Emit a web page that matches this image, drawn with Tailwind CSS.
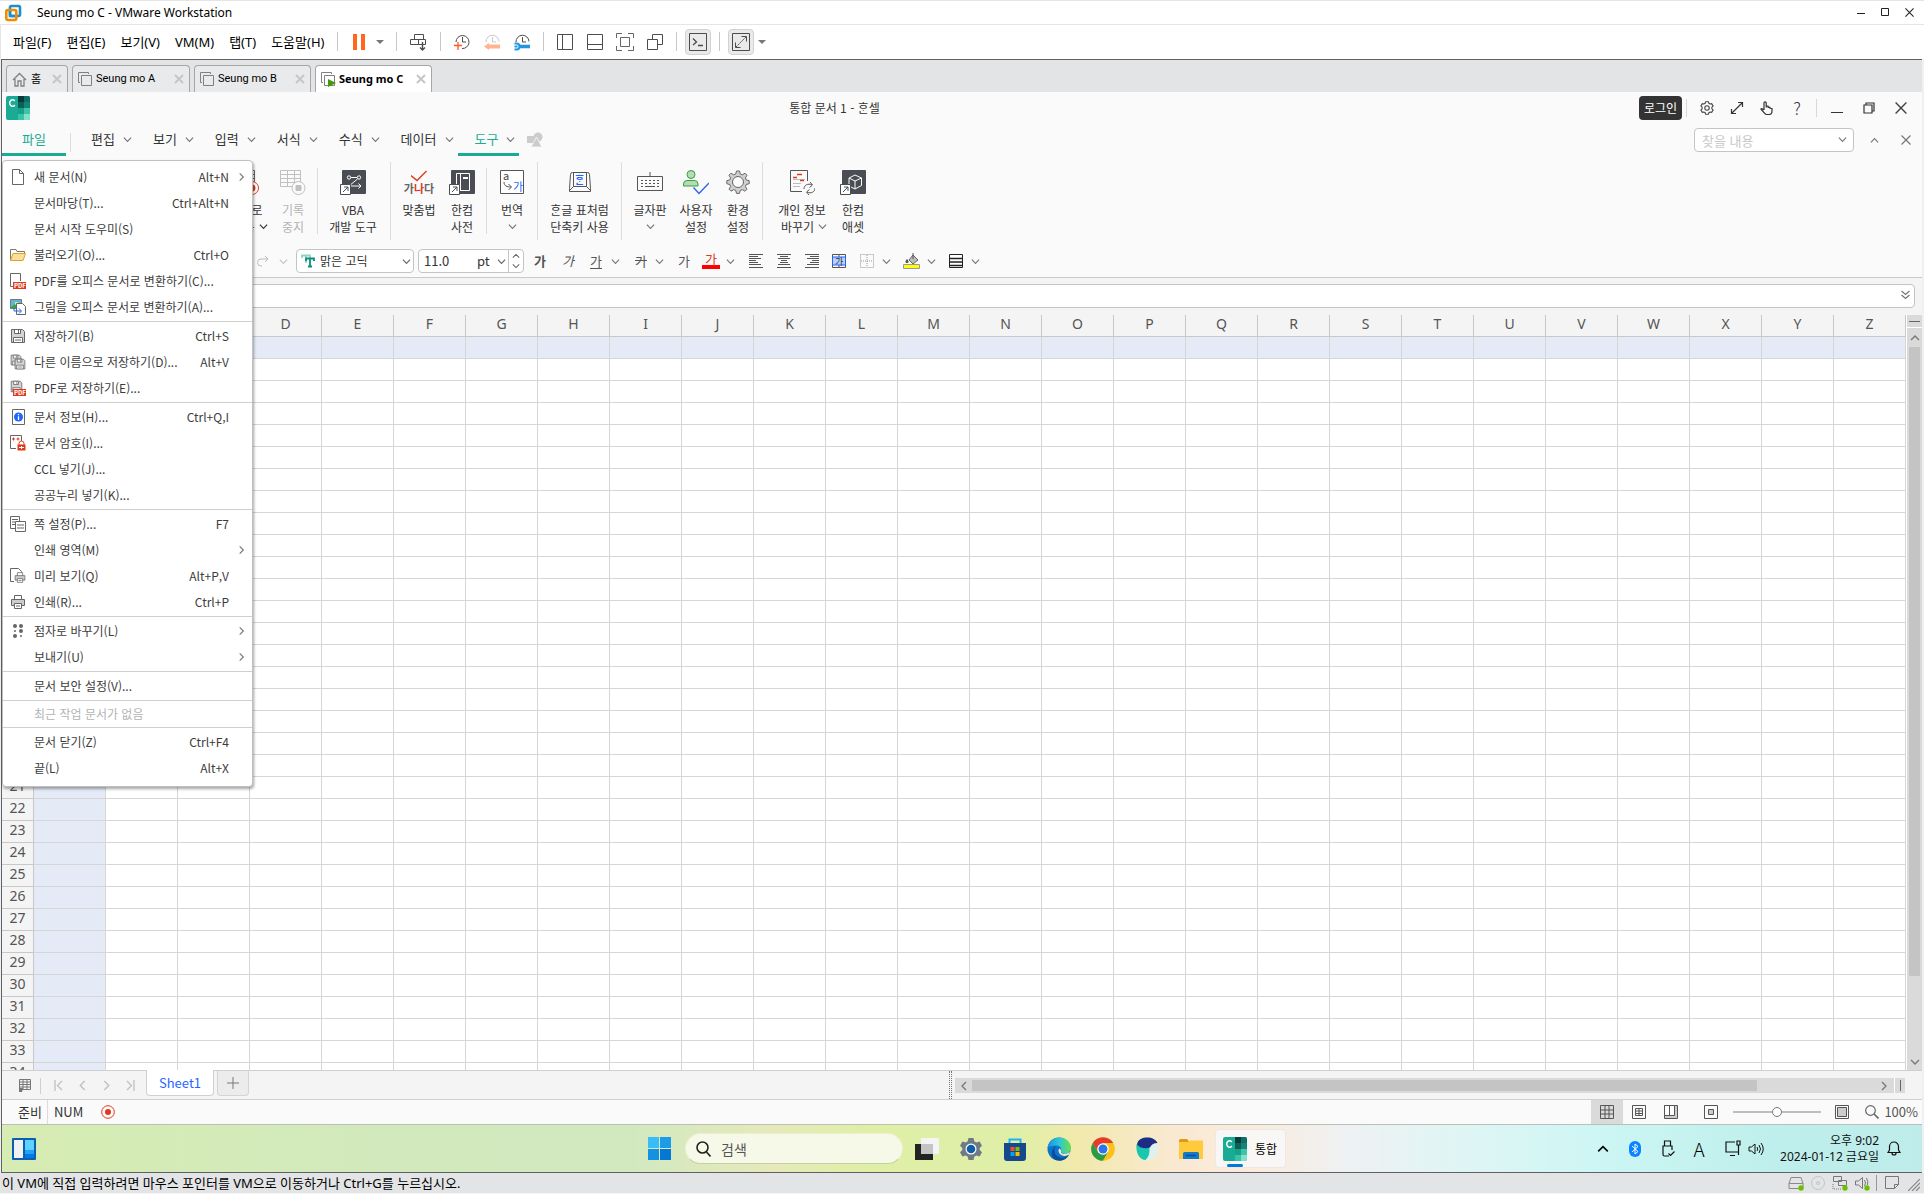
<!DOCTYPE html>
<html lang="ko">

<head>
    <meta charset="UTF-8">
    <meta name="viewport" content="width=device-width, initial-scale=1.0">
    <title>Seung mo C - VMware Workstation</title>
    <script src="https://cdn.jsdelivr.net/npm/@tailwindcss/browser@4"></script>
</head>

<body class="bg-[#f0f0f0] text-black font-['Noto_Sans','Noto_Sans_CJK_KR',sans-serif] text-xs leading-4">
    <!-- shared shapes -->
    <svg class="hidden">
        <symbol id="down" viewBox="0 0 10 10"><path d="M1 3l4 4 4-4" fill="none" stroke="currentColor" stroke-width="1.3" /></symbol>
        <symbol id="up" viewBox="0 0 10 10"><path d="M1 7l4-4 4 4" fill="none" stroke="currentColor" stroke-width="1.3" /></symbol>
        <symbol id="right" viewBox="0 0 10 10"><path d="M3 1l4 4-4 4" fill="none" stroke="currentColor" stroke-width="1.3" /></symbol>
        <symbol id="left" viewBox="0 0 10 10"><path d="M7 1L3 5l4 4" fill="none" stroke="currentColor" stroke-width="1.3" /></symbol>
        <symbol id="cross" viewBox="0 0 10 10"><path d="M0.5 0.5l9 9M9.5 0.5l-9 9" fill="none" stroke="currentColor" stroke-width="1.2" /></symbol>
        <symbol id="tabx" viewBox="0 0 10 10"><path d="M1 1l8 8M9 1l-8 8" fill="none" stroke="currentColor" stroke-width="2" /></symbol>
        <symbol id="vm" viewBox="0 0 16 16"><path d="M11.500 3V1.500H1.500v10H3M4.500 4.500h10v10h-10z" fill="none" stroke="#808080" /></symbol>
        <symbol id="hcell" viewBox="0 0 24 24">
            <rect width="24" height="24" rx="2" fill="#1aab94" />
            <path d="M12 0h6v6h-6z" fill="#063c3c" /><path d="M18 0h4a2 2 0 012 2v4h-6z" fill="#0f6e65" />
            <path d="M12 6h6v6h-6z" fill="#0e5f58" /><path d="M18 6h6v6h-6z" fill="#138577" />
            <path d="M12 12h6v6h-6z" fill="#17a08a" /><path d="M18 12h6v6h-6z" fill="#3cc5a9" />
            <path d="M12 18h6v6h-6z" fill="#37c3a7" /><path d="M18 18h6v4a2 2 0 01-2 2h-4z" fill="#86dfc9" />
            <path d="M8.800 5A2.800 3.300 0 108.800 9" fill="none" stroke="#fff" stroke-width="1.500" />
        </symbol>
        <symbol id="floppy" viewBox="0 0 16 16">
            <path d="M1.500 1.500h11l2 2v11h-13z" fill="#d4d4d4" stroke="#666" />
            <path d="M4.500 1.500h6v4h-6zM3.500 9.500h9v5h-9z" fill="#fff" stroke="#666" /><path d="M8.500 2v3M5 12h6" stroke="#666" />
        </symbol>
        <symbol id="linkbox" viewBox="0 0 11 11"><path d="M.5.5h10v10H.5z" fill="#fff" stroke="#4b4d54" /><path d="M3 8l5-5M4 3h4v4" fill="none" stroke="#4b4d54" /></symbol>
    </svg>

    <div class="h-screen flex flex-col overflow-hidden">
        <!-- window title -->
        <header class="h-[25px] shrink-0 flex items-center bg-white border-t border-b border-[#e5e5e5] pl-1 pr-[10px]">
            <svg class="w-[18px] h-[18px]" viewBox="0 0 18 18" fill="none" stroke-width="2.600">
                <rect x="6" y="2" width="10" height="10" rx="1.500" stroke="#1b8fd0" /><rect x="2.300" y="6" width="10" height="10" rx="1.500" stroke="#f38b00" /><path d="M6 7v5h5" stroke="#1b8fd0" />
            </svg>
            <h1 class="ml-[15px] flex-1 text-[12px]">Seung mo C - VMware Workstation</h1>
            <div class="flex items-center gap-[15px]">
                <button aria-label="최소화"><svg class="w-[9px] h-[9px]" viewBox="0 0 9 9"><path d="M0 5.500h8" stroke="#222" /></svg></button>
                <button aria-label="최대화"><svg class="w-[9px] h-[9px]" viewBox="0 0 9 9"><path d="M.5.5h7v7h-7z" fill="none" stroke="#222" /></svg></button>
                <button aria-label="닫기"><svg class="w-[9px] h-[9px] text-[#222]"><use href="#cross" /></svg></button>
            </div>
        </header>

        <!-- vm menu and toolbar -->
        <nav class="h-[34px] shrink-0 flex items-center bg-white pl-3 pb-px text-[13px] border-l border-[#e5e5e5]">
            <div class="flex gap-[15px]">
                <button>파일(F)</button>
                <button>편집(E)</button>
                <button>보기(V)</button>
                <button>VM(M)</button>
                <button>탭(T)</button>
                <button>도움말(H)</button>
            </div>
            <div class="flex items-center text-[#4c4c4c]">
                <span class="w-px h-[19px] bg-[#c8c8c8] ml-[13px]"></span>
                <button class="ml-[15px]" aria-label="일시 중지"><svg class="w-3 h-4" viewBox="0 0 12 16"><path d="M0 0h4v16H0zM8 0h4v16H8z" fill="#ff671f" /></svg></button>
                <button class="ml-[11px]" aria-label="전원 메뉴"><svg class="w-2 h-1" viewBox="0 0 8 4"><path d="M0 0h8L4 4z" fill="#777" /></svg></button>
                <span class="w-px h-[19px] bg-[#c8c8c8] ml-3"></span>
                <button class="ml-[13px]" aria-label="Ctrl+Alt+Del 보내기"><svg class="w-[18px] h-[18px]" viewBox="0 0 18 18" fill="none" stroke="currentColor"><path d="M4.500 1.500h9v5h-9zM.5 6.500h8v5h-8zM8.500 6.500h7v5h-7z" /><path d="M12.500 9v8M10 14.500l2.500 2.500 2.500-2.500" stroke-width="1.400" /></svg></button>
                <span class="w-px h-[19px] bg-[#c8c8c8] ml-3"></span>
                <div class="flex gap-3 ml-3">
                    <button aria-label="스냅샷 만들기"><svg class="w-[18px] h-[18px]" viewBox="0 0 18 18" fill="none" stroke="currentColor"><path d="M3 9a6.500 6.500 0 116 6.500M9.500 4v5H13" /><path d="M1 12.500h8M5 9v8" stroke="#ff5a1f" stroke-width="1.300" /></svg></button>
                    <button aria-label="스냅샷 되돌리기"><svg class="w-[18px] h-[18px]" viewBox="0 0 18 18" fill="none" stroke="#c8c8c8"><path d="M3 9a6.500 6.500 0 1113-.5M9.500 4v5H13" /><path d="M17 13.500H4" stroke="#ffb38e" stroke-width="4" /><path d="M6 10v7l-5-3.500z" fill="#ffb38e" stroke="none" /></svg></button>
                    <button aria-label="스냅샷 관리"><svg class="w-[18px] h-[18px]" viewBox="0 0 18 18" fill="none" stroke="currentColor"><path d="M3 9a6.500 6.500 0 1113-.5M9.500 4v5H13" /><path d="M17 13.500H6" stroke="#2196e3" stroke-width="3.500" /><path d="M1.500 10.500h2a3 3 0 010 6h-2M1.500 13.500h3" stroke="#2196e3" stroke-width="2" /></svg></button>
                </div>
                <span class="w-px h-[19px] bg-[#c8c8c8] ml-3"></span>
                <div class="flex gap-3 ml-3">
                    <button aria-label="라이브러리"><svg class="w-[18px] h-[18px]" viewBox="0 0 18 18" fill="none" stroke="currentColor"><path d="M1.500 1.500h15v15h-15zM6.500 1.500v15" /></svg></button>
                    <button aria-label="미리 보기 표시줄"><svg class="w-[18px] h-[18px]" viewBox="0 0 18 18" fill="none" stroke="currentColor"><path d="M1.500 1.500h15v15h-15zM1.500 11.500h15" /></svg></button>
                    <button aria-label="전체 화면"><svg class="w-[18px] h-[18px]" viewBox="0 0 18 18" fill="none" stroke="#666"><path d="M.5 5V.5H6M12 .5h5.500V5M17.500 13v4.500H12M6 17.500H.5V13" /><path d="M4.500 4.500h9v9h-9z" /></svg></button>
                    <button aria-label="유니티"><svg class="w-[18px] h-[18px]" viewBox="0 0 18 18" fill="none" stroke="currentColor"><path d="M6.500 6V1.500h10v10H12M1.500 6.500h10v10h-10z" /></svg></button>
                </div>
                <span class="w-px h-[19px] bg-[#c8c8c8] ml-3"></span>
                <button class="ml-2 p-[3px] rounded-sm bg-[#eaeaea] border border-[#d2d2d2]" aria-label="콘솔 보기"><svg class="w-[18px] h-[18px]" viewBox="0 0 18 18" fill="none" stroke="currentColor"><path d="M.5.5h17v17H.5z" /><path d="M4 5.500l3.500 3.500L4 12M9 12.500h5" stroke-width="1.300" /></svg></button>
                <span class="w-px h-[19px] bg-[#c8c8c8] ml-2"></span>
                <button class="ml-2 p-[3px] rounded-sm bg-[#eaeaea] border border-[#d2d2d2]" aria-label="화면 맞춤"><svg class="w-[18px] h-[18px]" viewBox="0 0 18 18" fill="none" stroke="currentColor"><path d="M.5.5h17v17H.5z" /><path d="M4 14L14 4" stroke-dasharray="2 1" /><path d="M9.500 3.500h5v5M3.500 9.500v5h5" /></svg></button>
                <button class="ml-1" aria-label="화면 맞춤 메뉴"><svg class="w-2 h-1" viewBox="0 0 8 4"><path d="M0 0h8L4 4z" fill="#777" /></svg></button>
            </div>
        </nav>

        <!-- vm tabs -->
        <div class="h-[33px] shrink-0 ml-px mr-[2px] border-t border-l border-[#5f6164] bg-[#e3e4e6] flex items-end gap-1 pl-1 text-[11px]">
            <div class="w-[62px] h-[27px] rounded-t border border-b-0 border-[#a6a6a6] bg-[#e9eaeb] flex items-center pl-[5px]">
                <svg class="w-[15px] h-[15px]" viewBox="0 0 15 15" fill="none" stroke="#808080" stroke-width="1.300"><path d="M1 8l6.500-6.500L14 8M3 7v7h3V9h3v5h3V7" /></svg>
                <button class="ml-1 flex-1 text-left">홈</button>
                <button class="mr-[5px]" aria-label="탭 닫기"><svg class="w-[10px] h-[10px] text-[#c6c6c6]"><use href="#tabx" /></svg></button>
            </div>
            <div class="w-[118px] h-[27px] rounded-t border border-b-0 border-[#a6a6a6] bg-[#e9eaeb] flex items-center pl-1">
                <svg class="w-4 h-4"><use href="#vm" /></svg>
                <button class="ml-[3px] flex-1 text-left font-['Roboto',sans-serif]">Seung mo A</button>
                <button class="mr-[5px]" aria-label="탭 닫기"><svg class="w-[10px] h-[10px] text-[#c6c6c6]"><use href="#tabx" /></svg></button>
            </div>
            <div class="w-[117px] h-[27px] rounded-t border border-b-0 border-[#a6a6a6] bg-[#e9eaeb] flex items-center pl-1">
                <svg class="w-4 h-4"><use href="#vm" /></svg>
                <button class="ml-[3px] flex-1 text-left font-['Roboto',sans-serif]">Seung mo B</button>
                <button class="mr-[5px]" aria-label="탭 닫기"><svg class="w-[10px] h-[10px] text-[#c6c6c6]"><use href="#tabx" /></svg></button>
            </div>
            <div class="w-[117px] h-[27px] rounded-t border border-b-0 border-[#a6a6a6] bg-white flex items-center pl-1">
                <svg class="w-4 h-4" viewBox="0 0 16 16"><use href="#vm" /><path d="M8 8l8 4-8 4z" fill="#3f9c0b" /></svg>
                <button class="ml-[3px] flex-1 text-left font-bold">Seung mo C</button>
                <button class="mr-[5px]" aria-label="탭 닫기"><svg class="w-[10px] h-[10px] text-[#c6c6c6]"><use href="#tabx" /></svg></button>
            </div>
        </div>

        <!-- guest desktop -->
        <main class="relative flex-1 min-h-0 ml-px mr-[2px] border-l border-b border-[#5f6164] flex flex-col bg-[#fafafa] text-[#333] font-['Noto_Sans_CJK_KR',sans-serif]">
            <div class="h-8 shrink-0 flex items-center pl-1">
                <svg class="w-6 h-6"><use href="#hcell" /></svg>
                <h2 class="flex-1 text-center text-[12px]">통합 문서 1 - ᄒᆞᆫ셀</h2>
                <button class="w-[43px] h-6 rounded bg-[#333] text-white text-[12px]">로그인</button>
                <span class="w-px h-[18px] bg-[#d8d8d8] ml-1"></span>
                <div class="flex items-center gap-4 ml-[13px]">
                    <button aria-label="설정"><svg class="w-[14px] h-[14px]" viewBox="0 0 14 14" fill="none" stroke="#444" stroke-width="1.100"><path d="M5.600.7h2.800l.5 1.600 1.200.7 1.600-.4 1.400 2.400-1.200 1.200v1.600l1.200 1.200-1.400 2.400-1.600-.4-1.200.7-.5 1.600H5.600l-.5-1.600-1.200-.7-1.600.4L.9 9l1.200-1.200V6.200L.9 5l1.400-2.400 1.600.4 1.200-.7z" /><circle cx="7" cy="7" r="2.200" /></svg></button>
                    <button aria-label="전체 화면"><svg class="w-[14px] h-[14px]" viewBox="0 0 14 14" fill="none" stroke="#333" stroke-width="1.200"><path d="M1.500 12.500l11-11M8 1.500h4.500V6M1.500 8v4.500H6" /></svg></button>
                    <button aria-label="터치 모드"><svg class="w-[14px] h-[14px]" viewBox="0 0 14 14" fill="none" stroke="#333" stroke-width="1.200"><path d="M4 9V2a1 1 0 012.200 0v4.500-1.500l2 .3v1l1.800 0v1l2 .2v2.500c0 2-1 3.500-3 3.500H6.500c-1.500 0-2.500-2-5.500-5.500 1-1 2 0 3 1" /></svg></button>
                    <button class="w-[14px] text-[17px] font-light" aria-label="도움말">?</button>
                </div>
                <span class="w-px h-[18px] bg-[#d8d8d8] ml-3"></span>
                <div class="flex items-center gap-5 ml-[14px] mr-[15px]">
                    <button aria-label="최소화"><svg class="w-3 h-3" viewBox="0 0 12 12"><path d="M0 10.500h12" stroke="#333" /></svg></button>
                    <button aria-label="이전 크기로"><svg class="w-3 h-3" viewBox="0 0 12 12" fill="none" stroke="#333" stroke-width="1.200"><path d="M1 3h8v8H1zM3 3V1h8v8H9" /></svg></button>
                    <button aria-label="닫기"><svg class="w-3 h-3 text-[#444]"><use href="#cross" /></svg></button>
                </div>
            </div>

            <!-- ribbon tabs -->
            <div class="h-[33px] shrink-0 flex text-[13px]">
                <button class="w-16 h-8 shrink-0 pt-px pr-3 pl-3 border-b-3 border-[#1aab94] text-[#1aab94] leading-7">파일</button>
                <span class="w-px h-[19px] bg-[#dcdcdc] mt-[9px] ml-1"></span>
                <div class="flex ml-[3px]">
                    <button class="h-8 pt-px pl-[17px] pr-1 flex items-center gap-2 border-b-3 border-transparent">편집<svg class="w-[9px] h-[9px] text-[#777]"><use href="#down" /></svg></button>
                    <button class="h-8 pt-px pl-[17px] pr-1 flex items-center gap-2 border-b-3 border-transparent">보기<svg class="w-[9px] h-[9px] text-[#777]"><use href="#down" /></svg></button>
                    <button class="h-8 pt-px pl-[17px] pr-1 flex items-center gap-2 border-b-3 border-transparent">입력<svg class="w-[9px] h-[9px] text-[#777]"><use href="#down" /></svg></button>
                    <button class="h-8 pt-px pl-[17px] pr-1 flex items-center gap-2 border-b-3 border-transparent">서식<svg class="w-[9px] h-[9px] text-[#777]"><use href="#down" /></svg></button>
                    <button class="h-8 pt-px pl-[17px] pr-1 flex items-center gap-2 border-b-3 border-transparent">수식<svg class="w-[9px] h-[9px] text-[#777]"><use href="#down" /></svg></button>
                    <button class="h-8 pt-px pl-[17px] pr-1 flex items-center gap-2 border-b-3 border-transparent">데이터<svg class="w-[9px] h-[9px] text-[#777]"><use href="#down" /></svg></button>
                    <button class="h-8 pt-px pl-[17px] pr-1 flex items-center gap-2 border-b-3 border-[#1aab94] text-[#1aab94]">도구<svg class="w-[9px] h-[9px] text-[#777]"><use href="#down" /></svg></button>
                </div>
                <button class="ml-2 h-8" aria-label="도형"><svg class="w-4 h-4" viewBox="0 0 16 16" fill="#ccc"><path d="M0 4h8v7H0z" /><circle cx="11" cy="5" r="4.500" /><path d="M9.500 5L15 15H4z" stroke="#fafafa" stroke-width=".8" /></svg></button>
                <div class="ml-auto flex items-center h-[30px] mt-[1px]">
                    <div class="relative">
                        <input type="text" aria-label="찾을 내용" placeholder="찾을 내용" class="block w-40 h-6 pl-[7px] pr-6 rounded border border-[#c4c4c4] bg-white text-[13px] placeholder:text-[#c8c8c8]">
                        <svg class="absolute right-[7px] top-[7px] w-[9px] h-[9px] text-[#777]"><use href="#down" /></svg>
                    </div>
                    <button class="ml-4" aria-label="리본 접기"><svg class="w-[9px] h-[9px] text-[#777]"><use href="#up" /></svg></button>
                    <button class="ml-[22px] mr-[11px]" aria-label="문서 닫기"><svg class="w-[10px] h-[10px] text-[#777]"><use href="#cross" /></svg></button>
                </div>
            </div>

            <!-- ribbon -->
            <div class="h-[90px] shrink-0 flex pl-[220px] text-[12px] leading-[17px]">
                <button class="w-12 pt-3 flex flex-col items-center">
                    <svg class="w-[26px] h-[26px]" viewBox="0 0 26 26" fill="none" stroke="#666"><path d="M.5 1.500h21v16H.5zM.5 5.500h21M.5 9.500h21M.5 13.500h21M7.500 1.500v16M14.500 1.500v16" /><circle cx="19" cy="19" r="6.500" fill="#fff" stroke="#e03a1e" /><circle cx="19" cy="19" r="3.500" fill="#e03a1e" stroke="none" /></svg>
                    <span class="mt-[6px]">매크로</span>
                    <span class="flex items-center gap-1 pl-2">기록<svg class="w-[9px] h-[9px]"><use href="#down" /></svg></span>
                </button>
                <button class="w-[46px] pt-3 flex flex-col items-center text-[#b4b4b4]">
                    <svg class="w-[26px] h-[26px]" viewBox="0 0 26 26" fill="none" stroke="#c0c0c0"><path d="M.5 1.500h20v16H.5zM.5 5.500h20M.5 9.500h20M.5 13.500h20M7.500 1.500v16M14.500 1.500v16" /><circle cx="18.500" cy="19" r="6.500" fill="#fafafa" /><path d="M16 16.500h5v5h-5z" fill="#c0c0c0" /></svg>
                    <span class="mt-[6px]">기록</span><span>중지</span>
                </button>
                <span class="w-px h-[66px] bg-[#dcdcdc] mt-[11px] mx-px"></span>
                <button class="w-[68px] pt-3 flex flex-col items-center whitespace-nowrap">
                    <svg class="w-[26px] h-[26px]" viewBox="0 0 26 26"><rect x="2" y="1" width="24" height="24" rx="1" fill="#4b4d54" /><g fill="none" stroke="#fff"><circle cx="9" cy="8.500" r="1.700" /><circle cx="19" cy="8.500" r="1.700" /><path d="M11 8.500h6M17.500 10L9 17h12M18.500 14.500L21 17l-2.500 2.500" /></g><svg y="15" width="11" height="11"><use href="#linkbox" /></svg></svg>
                    <span class="mt-[6px]">VBA</span><span>개발 도구</span>
                </button>
                <span class="w-px h-[78px] bg-[#dcdcdc] mt-[5px] mx-[3px]"></span>
                <button class="w-[50px] pt-3 flex flex-col items-center whitespace-nowrap">
                    <span class="h-[26px] flex flex-col items-center leading-3 font-bold"><svg class="w-4 h-[13px]" viewBox="0 0 16 13"><path d="M0 6.500l6 5L15.500 2" fill="none" stroke="#e03a1e" stroke-width="1.400" /></svg><span class="text-[11px] text-[#666]">가<span class="text-[#e03a1e]">나</span>다</span></span>
                    <span class="mt-[6px]">맞춤법</span>
                </button>
                <button class="w-9 pt-3 mr-[3px] flex flex-col items-center whitespace-nowrap">
                    <svg class="w-[26px] h-[26px]" viewBox="0 0 26 26"><rect x="2" y="1" width="24" height="24" rx="1" fill="#4b4d54" /><path d="M7.500 4.500h13v17h-13zM11.500 4.500v17" fill="none" stroke="#fff" /><path d="M14 8h5v2h-5z" fill="#fff" /><svg y="15" width="11" height="11"><use href="#linkbox" /></svg></svg>
                    <span class="mt-[6px]">한컴</span><span>사전</span>
                </button>
                <span class="w-px h-[66px] bg-[#dcdcdc] mt-[11px] mx-[3px]"></span>
                <button class="w-11 pt-3 flex flex-col items-center">
                    <svg class="w-[26px] h-[26px]" viewBox="0 0 26 26"><path d="M1.500 1.500h23v23h-23z" fill="#fff" stroke="#555" /><text x="4" y="11" font-size="11" fill="#444">a</text><path d="M5 13c0 4 3 5 7 5M9.500 15l3 3-3 3" fill="none" stroke="#555" /><text x="14" y="22" font-size="11" fill="#1f66ff">가</text></svg>
                    <span class="mt-[6px]">번역</span><svg class="w-[9px] h-[9px] mt-1 text-[#777]"><use href="#down" /></svg>
                </button>
                <span class="w-px h-[78px] bg-[#dcdcdc] mt-[5px] mx-[3px]"></span>
                <button class="w-[77px] pt-3 flex flex-col items-center whitespace-nowrap">
                    <svg class="w-[26px] h-[26px]" viewBox="0 0 26 26" fill="none" stroke="#555"><path d="M5.500 3.500h15a2 2 0 012 2l1 14v3h-21v-3l1-14a2 2 0 012-2z" /><path d="M6.500 3.500v14h13v-14M2.500 21.500l4-4M23.500 21.500l-4-4" /><text x="8" y="15" font-size="10" fill="#1f66ff" stroke="none" font-weight="bold">ᄒᆞᆫ</text></svg>
                    <span class="mt-[6px]">ᄒᆞᆫ글 표처럼</span><span>단축키 사용</span>
                </button>
                <span class="w-px h-[78px] bg-[#dcdcdc] mt-[5px] mx-[3px]"></span>
                <button class="w-[50px] pt-3 flex flex-col items-center whitespace-nowrap">
                    <svg class="w-[26px] h-[26px]" viewBox="0 0 26 26" fill="none" stroke="#555"><path d="M.5 7.500h25v14H.5zM13 3v4.500" /><path d="M4 11.500h18M4 14.500h18" stroke-dasharray="2 2" /><path d="M4 17.500h2M8 17.500h10M20 17.500h2" /></svg>
                    <span class="mt-[6px]">글자판</span><svg class="w-[9px] h-[9px] mt-1 text-[#777]"><use href="#down" /></svg>
                </button>
                <button class="w-[42px] pt-3 flex flex-col items-center whitespace-nowrap">
                    <svg class="w-[26px] h-[26px]" viewBox="0 0 26 26"><g fill="#b5dcb6" stroke="#35a03a"><circle cx="8" cy="5.500" r="4" /><path d="M.5 17v-2a3.500 3.500 0 013.500-3.500h7.500a3.500 3.500 0 013.500 3.500v2z" /></g><path d="M10.500 18.500l5.500 6L26 14" fill="none" stroke="#2a66f0" stroke-width="1.400" /></svg>
                    <span class="mt-[6px]">사용자</span><span>설정</span>
                </button>
                <button class="w-[42px] pt-3 flex flex-col items-center">
                    <svg class="w-[26px] h-[26px]" viewBox="0 0 26 26"><path d="M11.500 2h3l.8 3 2 .8 2.700-1.600 2 2-1.600 2.700.8 2 3 .8v3l-3 .8-.8 2 1.600 2.700-2 2-2.700-1.600-2 .8-.8 3h-3l-.8-3-2-.8-2.700 1.600-2-2 1.600-2.700-.8-2-3-.8v-3l3-.8.8-2L4 6.200l2-2 2.700 1.600 2-.8z" fill="#cfcfcf" stroke="#666" /><circle cx="13" cy="13" r="5.500" fill="#fafafa" stroke="#666" /></svg>
                    <span class="mt-[6px]">환경</span><span>설정</span>
                </button>
                <span class="w-px h-[78px] bg-[#dcdcdc] mt-[5px] mx-[3px]"></span>
                <button class="w-[72px] pt-3 flex flex-col items-center whitespace-nowrap">
                    <svg class="w-[26px] h-[26px]" viewBox="0 0 26 26" fill="none" stroke="#555"><path d="M18.500 12V1.500h-17v21H13" /><path d="M4 10.500h12M4 14.500h8M4 17.500h7" stroke="#bbb" /><path d="M8 5.500h5M4 8.500h4M11 11.500h4" stroke="#e03a1e" stroke-width="1.400" /><path d="M15 20c0-4 4-6 8-4M21 13l2.500 3-3 2.500M26 19c0 4-4 6-8 4M20 26l-2.500-3 3-2.500" /></svg>
                    <span class="mt-[6px]">개인 정보</span>
                    <span class="flex items-center gap-1 pl-1">바꾸기<svg class="w-[9px] h-[9px] text-[#777]"><use href="#down" /></svg></span>
                </button>
                <button class="w-[30px] pt-3 flex flex-col items-center whitespace-nowrap">
                    <svg class="w-[26px] h-[26px]" viewBox="0 0 26 26"><rect x="2" y="1" width="24" height="24" rx="1" fill="#4b4d54" /><path d="M15 6l6.500 3v7.500L15 20l-6-3V9zM9 9l6 3 6.500-3M15 12v8" fill="none" stroke="#fff" /><svg y="15" width="11" height="11"><use href="#linkbox" /></svg></svg>
                    <span class="mt-[6px]">한컴</span><span>애셋</span>
                </button>
            </div>

            <!-- format bar -->
            <div class="h-[31px] shrink-0 flex items-center pb-[2px] pl-[255px] border-b border-[#c9c9c9] text-[13px] text-[#555]">
                <button aria-label="다시 실행"><svg class="w-3 h-3" viewBox="0 0 12 12" fill="none" stroke="#bbb"><path d="M11 4H4a3 3 0 000 7h1M8 1l3 3-3 3" /></svg></button>
                <button class="ml-[10px]" aria-label="다시 실행 목록"><svg class="w-[9px] h-[9px] text-[#c4c4c4]"><use href="#down" /></svg></button>
                <div class="relative ml-2">
                    <select aria-label="글꼴" class="block appearance-none w-[118px] h-6 pl-[23px] rounded border border-[#c4c4c4] bg-white text-[12px] leading-4 text-[#333]"><option>맑은 고딕</option></select>
                    <svg class="absolute left-[5px] top-[5px] w-[14px] h-[14px]" viewBox="0 0 14 14" fill="none" stroke-width="1.800"><path d="M1 4V1.500h8V4M5 2v7" stroke="#8fd3c6" /><path d="M5 7V4.500h8V7M9 5v8M7 12.500h4" stroke="#0f8e7b" /></svg>
                    <svg class="absolute right-[3px] top-[8px] w-[9px] h-[9px] text-[#666]"><use href="#down" /></svg>
                </div>
                <div class="ml-1 w-[106px] h-6 rounded border border-[#c4c4c4] bg-white flex items-center text-[#333]">
                    <input type="text" aria-label="글자 크기" value="11.0" class="w-[58px] pl-[5px] text-[13px]">
                    <span>pt</span>
                    <svg class="w-[9px] h-[9px] ml-[7px] text-[#666]"><use href="#down" /></svg>
                    <div class="ml-auto w-[15px] h-full border-l border-[#c4c4c4] flex flex-col items-center justify-between py-[2px] text-[#666]">
                        <button aria-label="크게"><svg class="w-2 h-2 block"><use href="#up" /></svg></button>
                        <button aria-label="작게"><svg class="w-2 h-2 block"><use href="#down" /></svg></button>
                    </div>
                </div>
                <button class="w-7 ml-[2px] font-bold">가</button>
                <button class="w-7 italic">가</button>
                <button class="w-7 underline underline-offset-2">가</button>
                <button class="ml-px" aria-label="밑줄 목록"><svg class="w-[9px] h-[9px] text-[#777]"><use href="#down" /></svg></button>
                <button class="w-7 ml-[7px] line-through">가</button>
                <button aria-label="취소선 목록"><svg class="w-[9px] h-[9px] text-[#777]"><use href="#down" /></svg></button>
                <button class="w-7 ml-[6px]">가</button>
                <button class="w-[18px] ml-1 h-4 border-b-4 border-[#f00] text-[#e03a1e] leading-3">가</button>
                <button class="ml-[6px]" aria-label="글자 색 목록"><svg class="w-[9px] h-[9px] text-[#777]"><use href="#down" /></svg></button>
                <button class="ml-[14px]" aria-label="왼쪽 정렬"><svg class="w-[14px] h-[14px]" viewBox="0 0 14 14" stroke="#555"><path d="M0 .5h14M0 2.500h9M0 4.500h12M0 6.500h7M0 8.500h9M0 10.500h12M0 13.500h14" /></svg></button>
                <button class="ml-[14px]" aria-label="가운데 정렬"><svg class="w-[14px] h-[14px]" viewBox="0 0 14 14" stroke="#555"><path d="M0 .5h14M3 2.500h8M1 4.500h12M4 6.500h6M3 8.500h8M1 10.500h12M0 13.500h14" /></svg></button>
                <button class="ml-[14px]" aria-label="오른쪽 정렬"><svg class="w-[14px] h-[14px]" viewBox="0 0 14 14" stroke="#555"><path d="M0 .5h14M5 2.500h9M2 4.500h12M7 6.500h7M5 8.500h9M2 10.500h12M0 13.500h14" /></svg></button>
                <button class="ml-3" aria-label="셀 병합"><svg class="w-4 h-4" viewBox="0 0 16 16"><path d="M1.500 1.500h13v13h-13zM8 1v14" fill="none" stroke="#555" /><path d="M1.500 4h13v8h-13z" fill="#b9d0ff" stroke="#1f66ff" /><text x="4" y="11.500" font-size="9" fill="#333">가</text></svg></button>
                <button class="ml-[13px]" aria-label="테두리"><svg class="w-[14px] h-[14px]" viewBox="0 0 14 14" fill="none" stroke="#999" stroke-dasharray="1 1"><path d="M.5.5h13v13H.5zM7 1v12M1 7h12" /></svg></button>
                <button class="ml-2" aria-label="테두리 목록"><svg class="w-[9px] h-[9px] text-[#777]"><use href="#down" /></svg></button>
                <button class="ml-3" aria-label="채우기"><svg class="w-[17px] h-4" viewBox="0 0 17 16"><path d="M.5 11.500h16v4H.5z" fill="#ff0" stroke="#999" /><path d="M10 2l5 5-5 4-4-4z" fill="#bbb" stroke="#666" /><path d="M10 0v6" stroke="#555" /><path d="M4 6c2 2 2 4 0 4s-2-2 0-4z" fill="#555" /></svg></button>
                <button class="ml-[7px]" aria-label="채우기 목록"><svg class="w-[9px] h-[9px] text-[#777]"><use href="#down" /></svg></button>
                <button class="ml-[13px]" aria-label="표 모양"><svg class="w-[14px] h-[14px]" viewBox="0 0 14 14"><path d="M.5.5h13v13H.5z" fill="#fff" stroke="#222" /><path d="M0 4.500h14M0 8h14M0 11.500h14" stroke="#222" stroke-width="1.600" /></svg></button>
                <button class="ml-2" aria-label="표 모양 목록"><svg class="w-[9px] h-[9px] text-[#777]"><use href="#down" /></svg></button>
            </div>

            <!-- formula bar -->
            <div class="h-[37px] shrink-0 bg-[#f4f4f4] pt-[6px] pl-2 pr-[7px] relative">
                <input type="text" aria-label="수식" class="block w-full h-6 rounded border border-[#c4c4c4] bg-white px-2">
                <svg class="absolute right-[12px] top-[12px] w-[9px] h-[10px]" viewBox="0 0 9 10" fill="none" stroke="#777" stroke-width="1.300"><path d="M.5 1l4 3.500L8.500 1M.5 5l4 3.500L8.500 5" /></svg>
            </div>

            <!-- sheet -->
            <div class="flex-1 min-h-0 flex">
                <div class="flex-1 min-w-0 overflow-hidden bg-white">
                    <table class="table-fixed border-separate border-spacing-0 w-[1904px] text-[14px] leading-4 text-[#555] font-['Noto_Sans',sans-serif]">
                        <thead><tr id="head" class="h-[22px]"></tr></thead>
                        <tbody id="rows"></tbody>
                    </table>
                </div>
                <div class="w-4 shrink-0 bg-[#dadada] border-l border-white flex flex-col items-center pt-[1px]">
                    <span class="w-[11px] h-[11px] flex items-center"><span class="w-full h-px bg-[#666]"></span></span>
                    <span class="w-full h-px bg-white"></span>
                    <button class="h-[19px] flex items-center" aria-label="위로"><svg class="w-[10px] h-[10px] text-[#777]"><use href="#up" /></svg></button>
                    <div class="flex-1 w-[11px]"><div class="h-[89%] bg-[#c4c4c4]"></div></div>
                    <button class="h-4 flex items-center" aria-label="아래로"><svg class="w-[10px] h-[10px] text-[#777]"><use href="#down" /></svg></button>
                </div>
            </div>

            <!-- sheet tabs -->
            <div class="h-[30px] shrink-0 bg-[#f4f4f4] border-t border-b border-[#cfcfcf] flex pl-[17px] pr-[17px] text-[#c0c0c0]">
                <button aria-label="시트 목록"><svg class="w-3 h-[13px]" viewBox="0 0 12 13" fill="none" stroke="#777"><path d="M.5.5h11v10H.5zM.5 3h11M.5 5.500h11M.5 8h11M4 .5v10M8 .5v10" /><path d="M0 9h4l-1 4H0z" fill="#777" stroke="none" /></svg></button>
                <span class="w-px h-4 bg-[#cfcfcf] mt-[7px] ml-[9px]"></span>
                <div class="flex gap-[13px] ml-[13px]">
                    <button aria-label="첫 시트"><svg class="w-[10px] h-[11px]" viewBox="0 0 10 11" fill="none" stroke="currentColor" stroke-width="1.300"><path d="M1 0v11M8 1L3.500 5.500 8 10" /></svg></button>
                    <button aria-label="이전 시트"><svg class="w-[11px] h-[11px]"><use href="#left" /></svg></button>
                    <button aria-label="다음 시트"><svg class="w-[11px] h-[11px]"><use href="#right" /></svg></button>
                    <button aria-label="끝 시트"><svg class="w-[10px] h-[11px]" viewBox="0 0 10 11" fill="none" stroke="currentColor" stroke-width="1.300"><path d="M9 0v11M2 1l4.500 4.500L2 10" /></svg></button>
                </div>
                <button class="ml-[11px] w-[68px] h-[26px] -mt-px rounded-b bg-white border border-t-0 border-[#d0d0d0] text-[13px] text-[#1f66ff]">Sheet1</button>
                <button class="ml-[3px] w-8 h-[25px] rounded-b bg-[#ececec] border border-t-0 border-[#d4d4d4] flex items-center justify-center" aria-label="시트 추가"><svg class="w-3 h-3" viewBox="0 0 12 12"><path d="M6 0v12M0 6h12" stroke="#777" /></svg></button>
                <div class="flex-[14_1_0%]"></div>
                <span class="w-[3px] border-l border-r border-dotted border-[#777]"></span>
                <div class="flex-[19_1_0%] h-[15px] mt-[7px] ml-[3px] bg-[#dadada] flex items-center text-[#777]">
                    <button class="w-[17px] flex justify-center" aria-label="왼쪽으로"><svg class="w-[10px] h-[10px]"><use href="#left" /></svg></button>
                    <div class="flex-1"><div class="w-[87%] h-[11px] bg-[#c4c4c4]"></div></div>
                    <button class="w-5 flex justify-center" aria-label="오른쪽으로"><svg class="w-[10px] h-[10px]"><use href="#right" /></svg></button>
                    <span class="w-[11px] h-full border-l border-white flex items-center justify-center"><span class="w-px h-[11px] bg-[#666]"></span></span>
                </div>
            </div>

            <!-- app status -->
            <div class="h-[25px] shrink-0 border-b border-[#b9c0b4] flex items-center pl-4 pr-1 text-[13px]">
                <span>준비</span>
                <span class="w-px h-full bg-[#dcdcdc] ml-[5px]"></span>
                <span class="ml-[6px]">NUM</span>
                <svg class="w-[14px] h-[14px] ml-[18px]" viewBox="0 0 14 14"><circle cx="7" cy="7" r="6.300" fill="none" stroke="#e03a1e" /><circle cx="7" cy="7" r="3" fill="#e03a1e" /></svg>
                <div class="ml-auto flex items-center h-full text-[#555]">
                    <button class="w-8 h-full bg-[#dadada] flex items-center justify-center" aria-label="기본 보기"><svg class="w-[14px] h-[14px]" viewBox="0 0 14 14" fill="none" stroke="#555"><path d="M.5.5h13v13H.5zM.5 5h13M.5 9h13M5 .5v13M9 .5v13" /></svg></button>
                    <button class="w-8 flex justify-center" aria-label="쪽 보기"><svg class="w-[14px] h-[14px]" viewBox="0 0 14 14" fill="none" stroke="#555"><path d="M.5.5h13v13H.5zM3.500 3.500h7v7h-7zM3.500 6h7M3.500 8.500h7M7 3.500v7" /></svg></button>
                    <button class="w-8 flex justify-center" aria-label="쪽 나누기"><svg class="w-[14px] h-[14px]" viewBox="0 0 14 14" stroke="#555"><path d="M.5.5h13v13H.5z" fill="#ccc" /><path d="M.5.5h10v10H.5zM5.500.5v10" fill="#fff" /></svg></button>
                    <button class="w-8 ml-2 flex justify-center" aria-label="축소"><svg class="w-[14px] h-[14px]" viewBox="0 0 14 14" fill="none" stroke="#555"><path d="M.5.5h13v13H.5z" /><path d="M4.500 4.500h5v5h-5z" fill="#ccc" /></svg></button>
                    <input type="range" aria-label="확대/축소" min="0" max="100" class="appearance-none w-[88px] h-[2px] mr-[5px] ml-[6px] bg-[#bdbdbd] [&::-webkit-slider-thumb]:appearance-none [&::-webkit-slider-thumb]:w-[10px] [&::-webkit-slider-thumb]:h-[10px] [&::-webkit-slider-thumb]:rounded-full [&::-webkit-slider-thumb]:bg-white [&::-webkit-slider-thumb]:border [&::-webkit-slider-thumb]:border-[#777]">
                    <button class="w-8 flex justify-center" aria-label="확대"><svg class="w-[14px] h-[14px]" viewBox="0 0 14 14" stroke="#555"><path d="M.5.5h13v13H.5z" fill="none" /><path d="M2.500 2.500h9v9h-9z" fill="#ccc" /></svg></button>
                    <svg class="w-[14px] h-[14px] ml-[7px]" viewBox="0 0 14 14" fill="none" stroke="#666" stroke-width="1.200"><circle cx="5.500" cy="5.500" r="4.800" /><path d="M9 9l4.500 4.500" stroke-width="1.600" /></svg>
                    <span class="ml-[5px]">100%</span>
                </div>
            </div>

            <!-- taskbar -->
            <div class="h-[47px] shrink-0 grid grid-cols-[1fr_auto_1fr] items-center text-black bg-[linear-gradient(90deg,#d6ecb2_0%,#d2e9bd_20%,#d2e9c0_33%,#e6e9ba_40%,#dfefa6_45%,#e0efa8_53%,#f1e9ac_56%,#f9e9d2_61%,#fbebdd_65%,#eef1f3_70%,#dff5f4_76%,#cdf6f4_83%,#bfefec_92%,#bdeceb_100%)]">
                <button class="ml-[10px] w-6" aria-label="위젯"><svg class="w-6 h-[22px] block" viewBox="0 0 24 22"><rect width="24" height="22" rx="1" fill="#0a5fb4" /><path d="M2 2h9v18H2z" fill="#f2f2f2" /><path d="M13 2h9v10h-9z" fill="#5fd3ff" /><path d="M13 12h9v4h-9z" fill="#1fa2f5" /><path d="M13 16h9v4h-9z" fill="#0078e8" /></svg></button>
                <div class="flex items-center pl-[10px]">
                    <button aria-label="시작"><svg class="w-[23px] h-[23px] block" viewBox="0 0 23 23"><path d="M0 0h11v11H0z" fill="#3cbcf6" /><path d="M12 0h11v11H12z" fill="#1c9be8" /><path d="M0 12h11v11H0z" fill="#1292e0" /><path d="M12 12h11v11H12z" fill="#0479d3" /></svg></button>
                    <label class="ml-[14px] w-[218px] h-[31px] rounded-full bg-[#f6f8e8] border border-b-[#c9cfa5] border-[#eceed0] flex items-center pl-[10px]">
                        <svg class="w-[15px] h-[16px]" viewBox="0 0 15 16" fill="none" stroke="#222" stroke-width="1.600"><circle cx="6.500" cy="6.500" r="5.500" /><path d="M10.500 11l4 4.500" /></svg>
                        <input type="text" aria-label="검색" placeholder="검색" class="ml-[10px] w-40 text-[14px] placeholder:text-[#555]">
                    </label>
                    <div class="flex items-center gap-5 ml-3">
                        <button aria-label="작업 보기"><svg class="w-6 h-6 block" viewBox="0 0 24 24"><path d="M0 7h18v16H0z" fill="#222" /><path d="M6 1h18v16H6z" fill="#f4f4f4" /><path d="M6 7h12v10H6z" fill="#c4c4c4" /></svg></button>
                        <button aria-label="설정"><svg class="w-6 h-6 block" viewBox="0 0 24 24"><path d="M9.500 1h5l.8 3.300 2 1.200 3.300-1L23 8.700l-2.300 2.300v2L23 15.300l-2.400 4.200-3.300-1-2 1.200-.8 3.300h-5l-.8-3.300-2-1.200-3.300 1L1 15.300 3.300 13v-2L1 8.700l2.400-4.200 3.300 1 2-1.200z" fill="#6f7a86" /><circle cx="12" cy="12" r="5.500" fill="#fff" /><circle cx="12" cy="12" r="4.300" fill="#0f5ea8" /></svg></button>
                        <button aria-label="스토어"><svg class="w-6 h-6 block" viewBox="0 0 24 24"><path d="M6.500 7V2.500h11V7" fill="none" stroke="#1fb1f3" stroke-width="2" /><path d="M1 6h22v15a3 3 0 01-3 3H4a3 3 0 01-3-3z" fill="#15498c" /><path d="M7.500 10h4v4h-4z" fill="#f25022" /><path d="M12.500 10h4v4h-4z" fill="#7fba00" /><path d="M7.500 15h4v4h-4z" fill="#00a4ef" /><path d="M12.500 15h4v4h-4z" fill="#ffb900" /></svg></button>
                        <button aria-label="Edge"><svg class="w-6 h-6 block" viewBox="0 0 24 24"><defs><linearGradient id="e1" x2="1"><stop stop-color="#1593dd" /><stop offset=".5" stop-color="#2ec5d8" /><stop offset="1" stop-color="#6be04a" /></linearGradient></defs><circle cx="12" cy="12" r="11.500" fill="#0d74cc" /><path d="M.6 10.500C2 4 6.500.5 12 .5c7 0 12 5 12 10 0 4-3 6-6.500 6-3 0-4-1-3.500-2.500 1-2-.5-5.500-5-5.500-4 0-7 1-8.400 2z" fill="url(#e1)" /><path d="M9 9c-3 3-2 9 3 11 4 1.500 7.500.5 10-2.500-3 6-9 7.500-14 5C3 19.500 4 12 9 9z" fill="#0b4d98" /><path d="M14 14c-.8 2 1 3 4 2.800 2-.2 3.500-.8 4.800-2-.2 1.200-.5 2-1 3C17 20.500 12 18 11.500 14c0-1 .3-2 1-2.500 1 .5 1.600 1.500 1.500 2.500z" fill="#f6e9cc" /></svg></button>
                        <button aria-label="Chrome"><svg class="w-6 h-6 block" viewBox="0 0 24 24"><circle cx="12" cy="12" r="11.800" fill="#fbc116" /><path d="M1.800 6A11.800 11.800 0 0122.200 6H12l-5 9z" fill="#e33b2e" /><path d="M1.800 6a11.800 11.800 0 0010 17.800L17 15l-9.500 1z" fill="#2a9c48" /><circle cx="12" cy="12" r="5.800" fill="#fff" /><circle cx="12" cy="12" r="4.500" fill="#2d74ea" /></svg></button>
                        <button aria-label="Whale"><svg class="w-6 h-6 block" viewBox="0 0 24 24"><path d="M1.500 7c-1 9 3 16 9.500 16 3-3 5-8 3-13C11 12 5 11 1.500 7z" fill="#19c6b0" /><path d="M22.500 6c-4 0-8 3-8 9-.5 4-2 6-4 8 8 1.500 14-5 12-17z" fill="#dff0f0" /><path d="M2 7.500C3 2 8 .5 12 .5c5 0 9 2 10.500 5.500-4 0-6.500 2-7.500 4.500C11 12 5 11.500 2 7.500z" fill="#1d2c84" /></svg></button>
                        <button aria-label="파일 탐색기"><svg class="w-6 h-6 block" viewBox="0 0 24 24"><path d="M0 3.500A1.500 1.500 0 011.500 2H8l2.500 3H0z" fill="#e09a0c" /><path d="M0 5h9l2-1.500h13V22H0z" fill="#ffcb3d" /><path d="M4 22v-5.500A1.500 1.500 0 015.500 15h13a1.500 1.500 0 011.500 1.500V22z" fill="#1379c8" /><path d="M7 18.500h10" stroke="#0a4e92" stroke-width="1.500" /></svg></button>
                    </div>
                    <button class="relative ml-3 w-[71px] h-[39px] rounded bg-[#f9f7f5] border border-[#ece8e6] flex items-center pl-[7px]">
                        <svg class="w-6 h-6"><use href="#hcell" /></svg>
                        <span class="ml-2 text-[12px]">통합</span>
                        <span class="absolute left-[11px] bottom-0 w-4 h-[3px] rounded-full bg-[#0078d4]"></span>
                    </button>
                </div>
                <div class="flex items-center justify-end pr-[21px]">
                    <button aria-label="숨겨진 아이콘"><svg class="w-3 h-3 block"><use href="#up" /></svg></button>
                    <svg class="w-3 h-4 ml-5" viewBox="0 0 12 16"><rect width="12" height="16" rx="6" fill="#0a84ff" /><path d="M3 5l6 5.500-3 2.500V3l3 2.500L3 11" fill="none" stroke="#fff" /></svg>
                    <svg class="w-[14px] h-[17px] ml-5" viewBox="0 0 14 17" fill="none" stroke="#111" stroke-width="1.200"><path d="M3.500 6V1h6v5M8 16H3.500A1.500 1.500 0 012 14.500V6h9v4" /><path d="M7.500 13.500l2 2 4-4" /></svg>
                    <span class="w-[14px] ml-[17px] text-center text-[19px] font-light">A</span>
                    <svg class="w-4 h-[17px] ml-[19px]" viewBox="0 0 16 17" fill="none" stroke="#111" stroke-width="1.200"><path d="M10 2H1v10h13M5 15.500h5M12 1h3v4h-3zM13.500 5v10" /></svg>
                    <svg class="w-4 h-4 ml-[7px]" viewBox="0 0 16 16" fill="none" stroke="#111"><path d="M1 6v4h2.500L7 13V3L3.500 6zM9 6q1.500 2 0 4M11 4q3 4 0 8M13 2q4.500 6 0 12" /></svg>
                    <div class="ml-4 text-right text-[12px] leading-4 text-[#111] font-['Noto_Sans','Noto_Sans_CJK_KR',sans-serif]"><p>오후 9:02</p><p>2024-01-12 금요일</p></div>
                    <button class="ml-2" aria-label="알림"><svg class="w-[14px] h-[15px] block" viewBox="0 0 14 15" fill="none" stroke="#111" stroke-width="1.200"><path d="M1 11.500h12L11.500 9V5.500a4.500 4.500 0 00-9 0V9zM5 12a2 2 0 004 0" /></svg></button>
                </div>
            </div>

            <!-- file menu -->
            <div id="menu" class="absolute left-0 top-[68px] w-[251px] bg-white border border-[#c0c0c0] rounded shadow-[1px_2px_3px_rgba(0,0,0,0.35)] pt-[3px] pb-[5px] text-[12px]">
            </div>
        </main>

        <!-- vm status -->
        <footer class="h-[21px] shrink-0 bg-[#e3e4e6] border-b border-[#f4f4f4] flex items-center pl-[2px] pr-1 text-[13px]">
            <p class="flex-1">이 VM에 직접 입력하려면 마우스 포인터를 VM으로 이동하거나 Ctrl+G를 누르십시오.</p>
            <div class="flex items-center gap-[6px]">
                <svg class="w-4 h-4" viewBox="0 0 16 16" fill="none" stroke="#888"><path d="M3 2.500h10l2 6v5H1v-5zM1 8.500h14" /><circle cx="13" cy="13" r="2.700" fill="#6cc000" stroke="none" /></svg>
                <svg class="w-4 h-4" viewBox="0 0 16 16" fill="none" stroke="#c4c4c4"><circle cx="8" cy="8" r="6.500" /><circle cx="8" cy="8" r="1.500" /></svg>
                <svg class="w-4 h-4" viewBox="0 0 16 16" fill="none" stroke="#777"><path d="M1.500 1.500h8v5h-8zM6.500 5.500h8v5h-8z" fill="#e3e4e6" /><path d="M1 9v5h9" stroke-dasharray="1 1" /><circle cx="13" cy="13" r="2.700" fill="#6cc000" stroke="none" /></svg>
                <svg class="w-4 h-4" viewBox="0 0 16 16" fill="none" stroke="#777"><path d="M1.500 6v4h3l4 3.500v-11L4.500 6zM10.500 5q2 3 0 6M12.500 3q2 4 1 7" /><circle cx="13" cy="13" r="2.700" fill="#6cc000" stroke="none" /></svg>
                <span class="w-px h-4 bg-[#999]"></span>
                <svg class="w-4 h-4 ml-px" viewBox="0 0 16 16" fill="none" stroke="#777"><path d="M1.500 1.500h13v8l-4 4h-9zM14.500 9.500h-4v4" /></svg>
                <svg class="w-3 h-3 ml-[2px] self-end" viewBox="0 0 12 12" stroke="#888" stroke-width="1.200"><path d="M0 12L12 0M4 12l8-8M8 12l4-4" /></svg>
            </div>
        </footer>
    </div>

    <script>
        // sheet grid
        const letters = 'ABCDEFGHIJKLMNOPQRSTUVWXYZ'.split('');
        const line = 'border-r border-b border-[#d6d6d6]';
        let head = `<th class="w-[32px] bg-[#f4f4f4] p-0 ${line}"></th>`;
        letters.forEach(l => {
            head += `<th class="w-[72px] bg-[#f4f4f4] p-0 pb-[3px] font-normal border-r border-b border-[#c8c8c8]">${l}</th>`;
        });
        document.getElementById('head').innerHTML = head;

        let rows = '';
        for (let r = 1; r <= 60; r++) {
            rows += `<tr class="h-[22px]"><th class="bg-[#f4f4f4] p-0 pb-[3px] font-normal border-r border-b border-[#c8c8c8]">${r}</th>`;
            letters.forEach((l, c) => {
                rows += `<td class="p-0 ${line} ${r === 1 || c === 0 ? 'bg-[#e4ebf7]' : 'bg-white'}"></td>`;
            });
            rows += '</tr>';
        }
        document.getElementById('rows').innerHTML = rows;

        // file menu: [label, shortcut, icon, has submenu], null is a separator
        const page = '<path d="M2.500.5h7l4 4v11h-11zM9.500.5v4h4" fill="#fff" stroke="#666"/>';
        const pdf = '<path d="M3 9h13v7H3z" fill="#e03a1e"/><text x="4" y="15" font-size="6" font-weight="bold" fill="#fff">PDF</text>';
        const disk = '<use href="#floppy" width="16" height="16"/>';
        const printer = '<path d="M4.500 6V1.500h7V6" fill="#fff" stroke="#666"/><path d="M1.500 5.500h13v6h-13z" fill="#ccc" stroke="#666"/><path d="M4.500 9.500h7v5h-7zM6 12h4" fill="#fff" stroke="#666"/>';
        const items = [
            ['새 문서(N)', 'Alt+N', page, true],
            ['문서마당(T)...', 'Ctrl+Alt+N'],
            ['문서 시작 도우미(S)'],
            ['불러오기(O)...', 'Ctrl+O', '<path d="M.5 13V2.500H6l1 2h7.500V7" fill="#fff" stroke="#777"/><path d="M3 6.500h12.500l-2.500 7H.500z" fill="#fbdf9d" stroke="#e0a020"/>'],
            ['PDF를 오피스 문서로 변환하기(C)...', '', '<path d="M.5 13.500V.5h10V8" fill="#fff" stroke="#666"/><path d="M.5 13.500H3" stroke="#666"/>' + pdf],
            ['그림을 오피스 문서로 변환하기(A)...', '', '<path d="M.5.5h11v9H.5z" fill="#58b6e8" stroke="#777"/><path d="M5 3h3v3H5z" fill="#ffe14d"/><path d="M0 9l5-4 3 5z" fill="#3f9c4b"/><path d="M6.500 4.500h6l3 3v8h-9z" fill="#fff" stroke="#666"/><path d="M4 9v3h7M9 9.500l2.500 2.500L9 14.500" fill="none" stroke="#1f66ff"/>'],
            null,
            ['저장하기(B)', 'Ctrl+S', disk],
            ['다른 이름으로 저장하기(D)...', 'Alt+V', '<use href="#floppy" width="12" height="12"/><use href="#floppy" x="4" y="4" width="12" height="12"/>'],
            ['PDF로 저장하기(E)...', '', '<use href="#floppy" width="13" height="13"/>' + pdf],
            null,
            ['문서 정보(H)...', 'Ctrl+Q,I', '<path d="M2.500.5h12v15h-12z" fill="#fff" stroke="#666"/><circle cx="8.500" cy="8" r="4.500" fill="#1f66ff"/><path d="M8.500 5v1.300M8.500 7.300V11" stroke="#fff" stroke-width="1.300"/>'],
            ['문서 암호(I)...', '', '<path d="M.5 13.500V.5h11V6M.5 13.500H6" fill="#fff" stroke="#666"/><path d="M2 4h3M3.500 2.500v3M6.500 4h3M8 2.500v3" stroke="#e03a1e"/><path d="M9 10V8.500a2.500 2.500 0 015 0V10" fill="none" stroke="#e03a1e"/><path d="M7.500 9.500h8v6h-8z" fill="#e03a1e"/><path d="M9 12.500h5M11.500 11v3" stroke="#fff"/>'],
            ['CCL 넣기(J)...'],
            ['공공누리 넣기(K)...'],
            null,
            ['쪽 설정(P)...', 'F7', '<path d="M.5.5h9v12h-9zM2 3.500h6M2 6h3M2 8.500h3" fill="#fff" stroke="#666"/><path d="M5.500 5.500h10v10h-10zM7 9h7M7 12h7" fill="#fff" stroke="#666"/>'],
            ['인쇄 영역(M)', '', '', true],
            ['미리 보기(Q)', 'Alt+P,V', '<path d="M.5 13.500V.5h8l3 3V5M.5 13.500H4" fill="none" stroke="#666"/><svg x="4" y="3" width="12" height="13" viewBox="0 0 16 16">' + printer + '</svg>'],
            ['인쇄(R)...', 'Ctrl+P', printer],
            null,
            ['점자로 바꾸기(L)', '', '<g fill="#666"><circle cx="5" cy="3" r="2"/><circle cx="11" cy="3" r="2"/><circle cx="5" cy="8" r="1"/><circle cx="11" cy="8" r="2"/><circle cx="5" cy="13" r="2"/><circle cx="11" cy="13" r="1"/></g>', true],
            ['보내기(U)', '', '', true],
            null,
            ['문서 보안 설정(V)...'],
            null,
            ['최근 작업 문서가 없음'],
            null,
            ['문서 닫기(Z)', 'Ctrl+F4'],
            ['끝(L)', 'Alt+X']
        ];
        let html = '';
        items.forEach(item => {
            if (!item) {
                html += '<hr class="my-px border-[#cfcfcf]">';
                return;
            }
            const [label, key = '', icon = '', sub = false] = item;
            const tone = label.startsWith('최근') ? 'h-6 text-[#b4b4b4]' : 'h-[26px] text-[#3c3c3c]';
            html += `<button class="w-full ${tone} flex items-center pl-[7px] pr-[6px] whitespace-nowrap">
                <svg class="w-4 h-4 mr-2" viewBox="0 0 16 16">${icon}</svg>
                <span class="flex-1 text-left">${label}</span><span>${key}</span>
                <svg class="w-[9px] h-[10px] ml-2 text-[#777]">${sub ? '<use href="#right" />' : ''}</svg>
            </button>`;
        });
        document.getElementById('menu').innerHTML = html;
    </script>
</body>

</html>
